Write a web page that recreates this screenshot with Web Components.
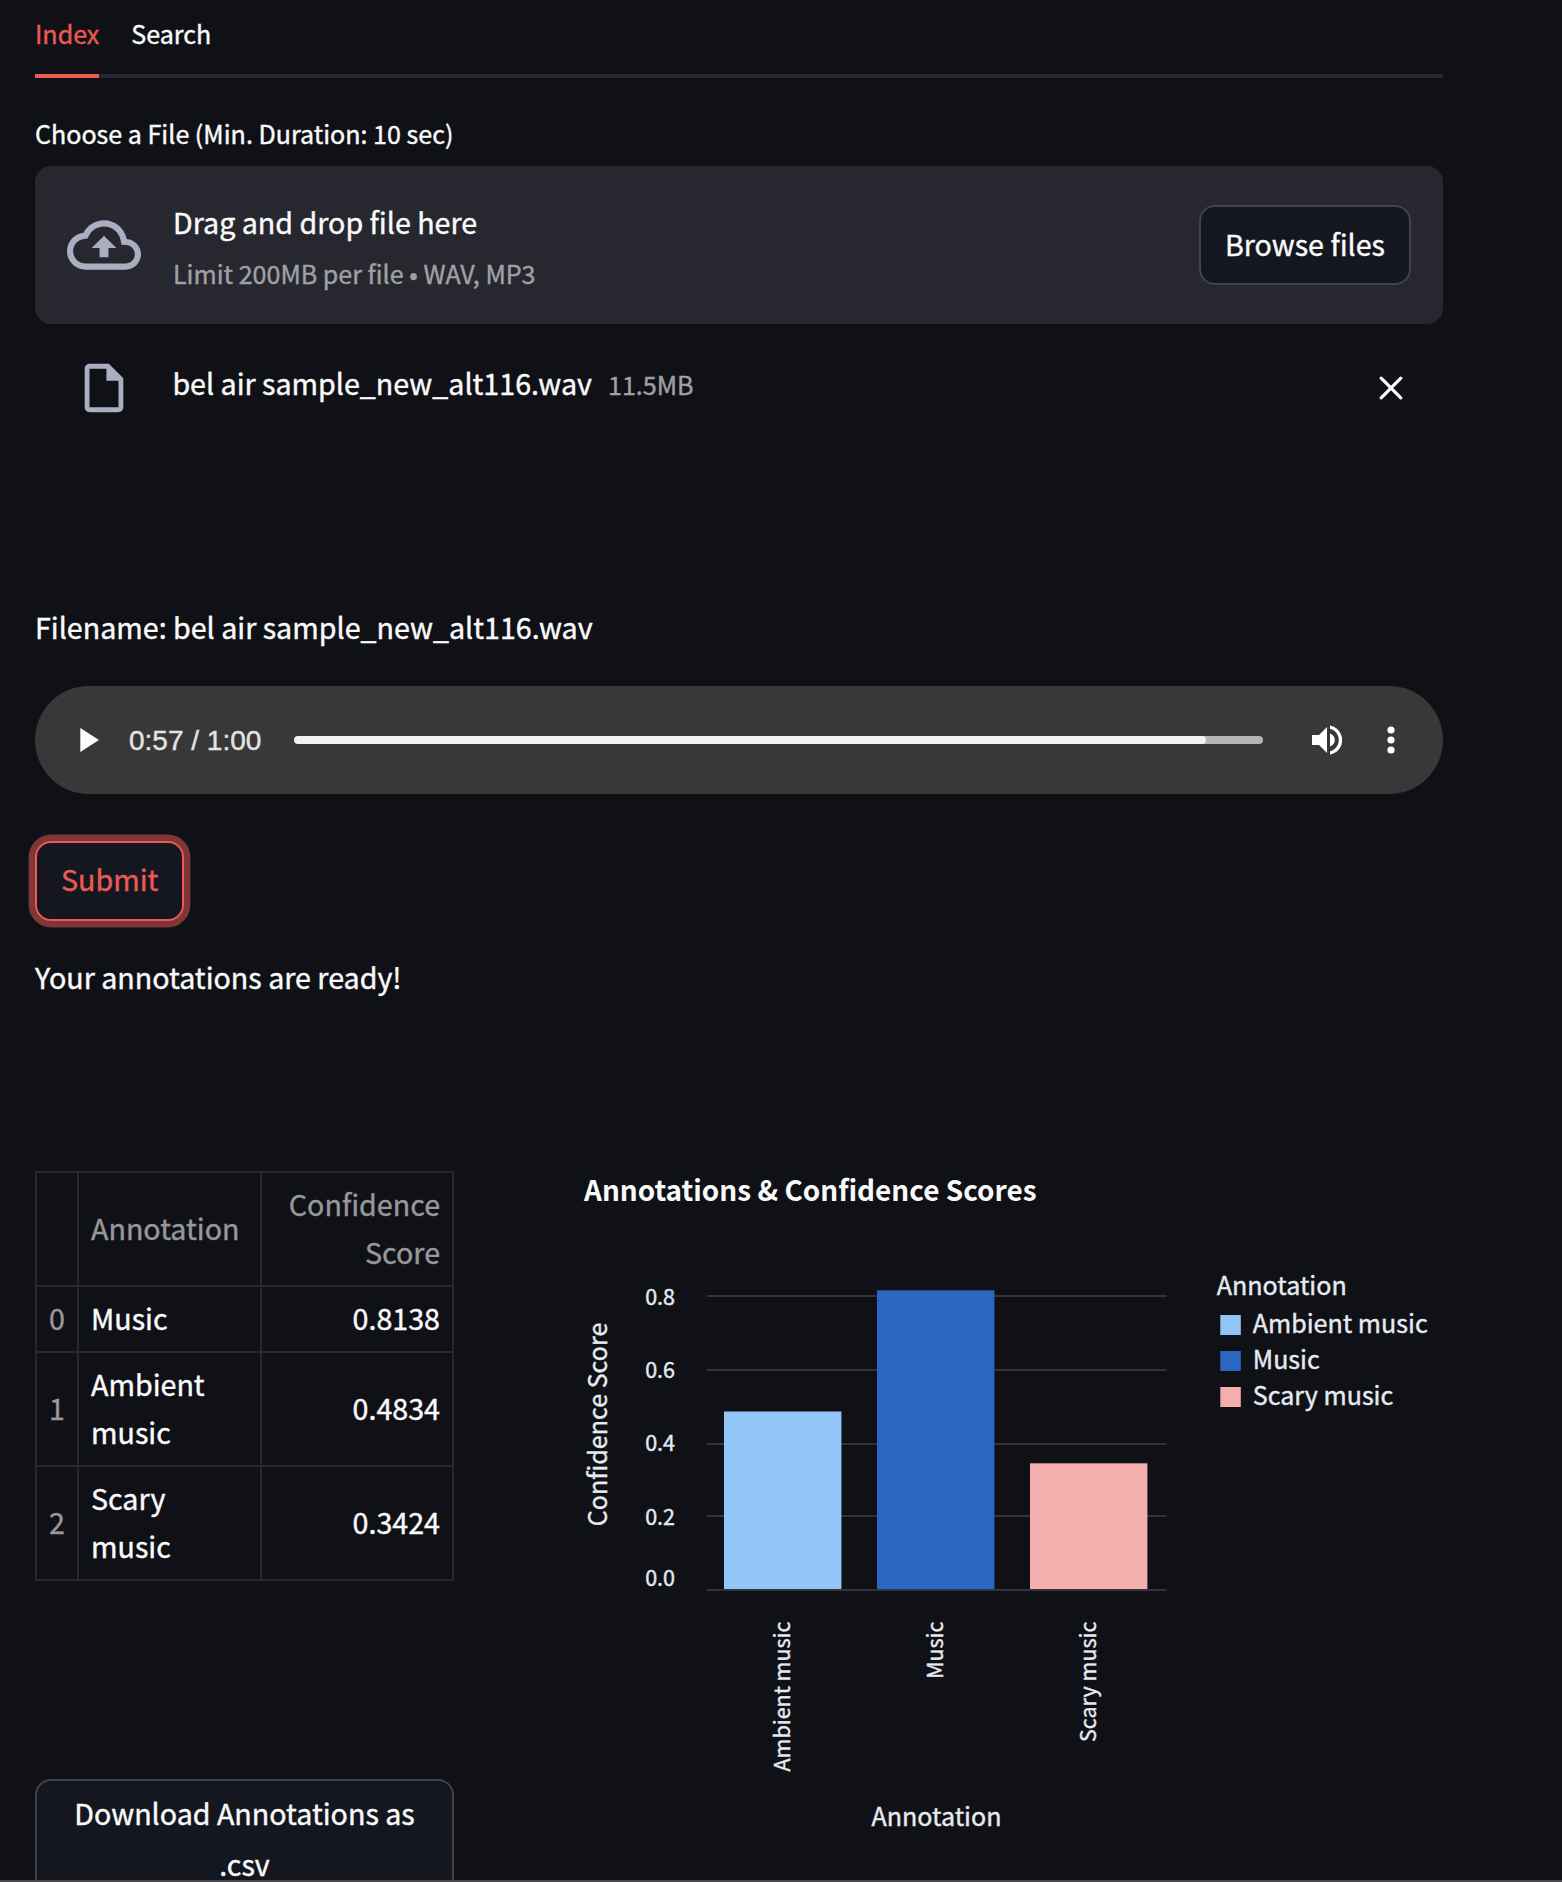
<!DOCTYPE html>
<html lang="en">
<head>
<meta charset="utf-8">
<title>Audio annotation</title>
<style>
html,body{margin:0;padding:0;background:#101116}
body{font-family:"Noto Sans CJK JP","Noto Sans",sans-serif;color:#fafafa;font-size:28.65px;line-height:48px;height:1882px;overflow:hidden;-webkit-text-stroke:.4px currentColor}
</style>
</head>
<body>
<annotation-app></annotation-app>
<script>
const define = (name, html) => customElements.define(name, class extends HTMLElement {
  connectedCallback() {
    if (this.shadowRoot) return;
    const t = document.createElement('template');
    t.innerHTML = typeof html === 'function' ? html(this) : html;
    this.attachShadow({mode: 'open'}).append(t.content.cloneNode(true));
  }
});

define('tab-item', `<style>
:host{display:block;height:74px;line-height:66px;font-size:25.07px;border-bottom:4px solid transparent;margin-bottom:-4px}
:host([selected]){color:#eb5a52;border-color:#eb5a52}
</style><slot></slot>`);

define('tab-bar', `<style>
:host{display:flex;gap:32px;height:74px;border-bottom:4px solid #27282e}
</style><slot></slot>`);

define('app-button', `<style>
:host{display:inline-flex;align-items:center;justify-content:center;box-sizing:border-box;height:80px;padding:0 24px 2px;border:2px solid #41424a;border-radius:16px;background:#141720;white-space:nowrap}
:host([focused]){padding-bottom:4px;color:#eb5a52;border-color:#eb5a52;box-shadow:0 0 0 6.4px #7e3636}
:host([wide]){display:flex;height:140px;width:419px;line-height:51px;text-align:center;white-space:normal;align-items:flex-start;padding-top:6px}
</style><slot></slot>`);

define('file-drop', `<style>
:host{display:flex;align-items:center;height:158px;box-sizing:border-box;padding:0 32px;border-radius:16px;background:#272730}
svg{width:74px;height:74px;margin-right:32px;fill:#acadc1;flex:none}
.text{flex:1;display:flex;flex-direction:column;gap:7px}
small{font-size:25.07px;line-height:40px;color:#a0a0a4}
</style>
<svg viewBox="0 0 24 24"><path d="M19.35 10.04C18.67 6.59 15.64 4 12 4 9.11 4 6.6 5.64 5.35 8.04 2.34 8.36 0 10.91 0 14c0 3.31 2.69 6 6 6h13c2.76 0 5-2.24 5-5 0-2.64-2.05-4.78-4.65-4.96zM19 18H6c-2.21 0-4-1.79-4-4 0-2.05 1.53-3.76 3.56-3.97l1.07-.11.5-.95C8.08 7.14 9.94 6 12 6c2.62 0 4.88 1.86 5.39 4.43l.3 1.5 1.53.11c1.56.1 2.78 1.41 2.78 2.96 0 1.65-1.35 3-3 3zM8 13h2.55v3h2.9v-3H16l-4-4z"/></svg>
<div class="text"><span>Drag and drop file here</span><small>Limit 200MB per file • WAV, MP3</small></div>
<app-button>Browse files</app-button>`);

define('file-row', `<style>
:host{display:flex;align-items:center;height:50px;padding:0 40px 0 40px}
.doc{width:58px;height:58px;fill:#acadc1;flex:none;margin-right:39.4px}
.names{flex:1;display:flex;align-items:baseline;gap:16px;padding-bottom:10px}
small{font-size:25.07px;color:#a0a0a4}
.x{width:24px;height:24px;stroke:#fafafa;stroke-width:3.2;stroke-linecap:round;flex:none}
</style>
<svg class="doc" viewBox="0 0 24 24"><path d="M14 2H6c-1.1 0-1.99.9-1.99 2L4 20c0 1.1.89 2 1.99 2H18c1.1 0 2-.9 2-2V8l-6-6zM6 20V4h7v5h5v11H6z"/></svg>
<div class="names"><slot></slot><small><slot name="size"></slot></small></div>
<svg class="x" viewBox="0 0 24 24"><path d="M2.2 2.2 21.8 21.8M21.8 2.2 2.2 21.8"/></svg>`);

define('audio-player', `<style>
:host{display:flex;align-items:center;height:108px;box-sizing:border-box;border-radius:54px;background:#373837;padding:0 48px 0 45px;color:#e4e4e3;font:28px/40px "Liberation Sans",Arial,sans-serif}
svg{fill:#fff;flex:none;display:block}
.play{width:19px;height:24px;margin-right:30px}
.time{width:137px;white-space:nowrap;margin-right:28px;padding-top:1px}
.track{flex:1;height:8px;border-radius:4px;background:#b5b5b4;overflow:hidden}
.fill{width:912px;height:8px;border-radius:4px;background:#f4f3f3}
.vol{width:30px;height:30px;margin:0 45px 0 49px}
.more{width:8px;height:28px}
</style>
<svg class="play" viewBox="0 0 19 24"><path d="M0.3 0 19 12 0.3 24z"/></svg>
<span class="time">0:57 / 1:00</span>
<div class="track"><div class="fill"></div></div>
<svg class="vol" viewBox="0 0 30 30"><path d="M0 10v10h7l8 8V2l-8 8zM18 8.500v13c2.800-1 4.800-3.500 4.800-6.500S20.800 9.500 18 8.500zM18 .4v3.300c5.200 1.300 8.800 5.800 8.800 11.300s-3.600 10-8.800 11.300v3.300c7-1.400 12.200-7.400 12.200-14.600S25 1.800 18 .4z"/></svg>
<svg class="more" viewBox="0 0 8 28"><circle cx="4" cy="4" r="3.6"/><circle cx="4" cy="14" r="3.6"/><circle cx="4" cy="24" r="3.6"/></svg>`);

const rows = [['Music','0.8138'],['Ambient music','0.4834'],['Scary music','0.3424']];
define('score-table', () => `<style>
:host{display:block;width:419px}
table{border-collapse:collapse;table-layout:fixed;width:419px}
td,th{border:2px solid #27282d;padding:7px 12px 9px;font-weight:400;text-align:left;vertical-align:middle}
th{color:#97989b;padding-right:0}
td:last-child,th:last-child{text-align:right;padding-right:12px}
tr{height:114px}tr.one{height:66px}
td:nth-child(2){padding-right:40px}
</style>
<table><colgroup><col style="width:42px"><col style="width:183px"><col style="width:192px"></colgroup>
<tr><th></th><th>Annotation</th><th>Confidence Score</th></tr>
${rows.map((r,i)=>`<tr class="${i?'':'one'}"><th>${i}</th><td>${r[0]}</td><td>${r[1]}</td></tr>`).join('')}
</table>`);

const series = [
  {name:'Ambient music', color:'#93c6f8', x:724, top:1411.5, base:790, legend:1315},
  {name:'Music', color:'#2b66c2', x:877, top:1290.3, base:943, legend:1351},
  {name:'Scary music', color:'#f3aead', x:1030, top:1463.3, base:1096, legend:1387}
];
define('score-chart', () => `<style>
:host{display:block}
svg{display:block;width:863px;height:690px;font-size:25.07px;overflow:visible}
text{fill:#e6eaf1;stroke:#e6eaf1;stroke-width:.4px}
.tick{font-size:21.5px}
.title{font-weight:700;font-size:28.65px;fill:#fafafa;stroke:none}
</style>
<svg viewBox="580 1171 863 690">
<text class="title" x="584" y="1201" textLength="452.500" lengthAdjust="spacingAndGlyphs">Annotations &amp; Confidence Scores</text>
<g fill="#31333f">${[1295,1369,1443,1515,1589].map(y=>`<rect x="707" y="${y}" width="459.500" height="2"/>`).join('')}</g>
${[['0.8',1305],['0.6',1378],['0.4',1451],['0.2',1525],['0.0',1585.5]].map(([t,y])=>`<text class="tick" x="675" y="${y}" text-anchor="end">${t}</text>`).join('')}
<text transform="translate(607 1424.500) rotate(-90)" text-anchor="middle">Confidence Score</text>
${series.map(s=>`<rect x="${s.x}" y="${s.top}" width="117.400" height="${1589-s.top}" fill="${s.color}"/>
<text class="tick" transform="translate(${s.base} 1621.500) rotate(-90)" text-anchor="end">${s.name}</text>
<rect x="1220.300" y="${s.legend}" width="20.500" height="20" fill="${s.color}"/>
<text x="1252.800" y="${s.legend+18}">${s.name}</text>`).join('')}
<text x="936.500" y="1826" text-anchor="middle">Annotation</text>
<text x="1216.800" y="1295">Annotation</text>
</svg>`);

define('annotation-app', `<style>
:host{display:block;position:relative;width:1562px;height:1882px;overflow:hidden}
main{display:flex;flex-direction:column;width:1408px;margin-left:35px}
.label{font-size:25.07px;line-height:40px;margin:35px 0 13px}
file-row{margin-top:39px}
.name{margin-top:190px}
audio-player{margin-top:35px}
.submit{margin-top:47px;display:flex}
.ready{margin-top:32px}
.results{margin-top:170px;display:flex;gap:126px}
.left{display:flex;flex-direction:column;gap:198px;width:419px;flex:none}
.edge{position:absolute;left:0;right:0;bottom:0;height:2px;background:#48484c}
</style>
<main>
<tab-bar><tab-item selected>Index</tab-item><tab-item>Search</tab-item></tab-bar>
<div class="label">Choose a File (Min. Duration: 10 sec)</div>
<file-drop></file-drop>
<file-row>bel air sample_new_alt116.wav<span slot="size">11.5MB</span></file-row>
<div class="name">Filename: bel air sample_new_alt116.wav</div>
<audio-player></audio-player>
<div class="submit"><app-button focused>Submit</app-button></div>
<div class="ready">Your annotations are ready!</div>
<div class="results"><div class="left"><score-table></score-table><app-button wide>Download Annotations as .csv</app-button></div><score-chart></score-chart></div>
</main>
<div class="edge"></div>`);
</script>
</body>
</html>
